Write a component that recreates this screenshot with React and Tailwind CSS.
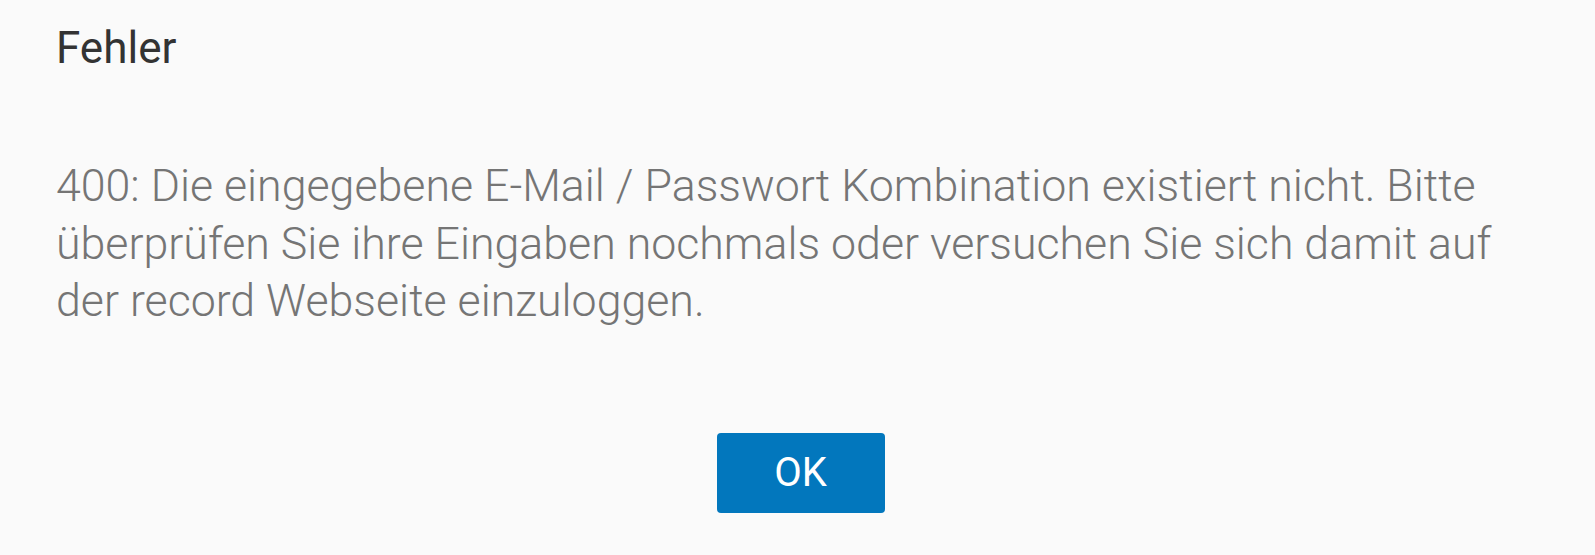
export default function App() {
  return (
    <div className="min-h-screen w-full bg-[#fafafa] flex flex-col" style={{ fontFamily: "Roboto, 'Noto Sans', sans-serif" }}>
      <div className="px-[56px] pt-[22px]">
        <h1 className="text-[44px] leading-[52px] font-normal text-[#333333]">Fehler</h1>
        <p className="mt-[84px] text-[44.7px] leading-[57.5px] font-light text-[#757575] max-w-[1483px]">
          400: Die eingegebene E-Mail / Passwort Kombination existiert nicht. Bitte überprüfen Sie ihre Eingaben nochmals oder versuchen Sie sich damit auf der record Webseite einzuloggen.
        </p>
      </div>
      <div className="flex justify-center mt-[102px] pl-[6px]">
        <button className="w-[168px] h-[80px] rounded-[4px] bg-[#0277bd] text-white text-[40px] font-normal flex items-center justify-center">
          OK
        </button>
      </div>
    </div>
  );
}
